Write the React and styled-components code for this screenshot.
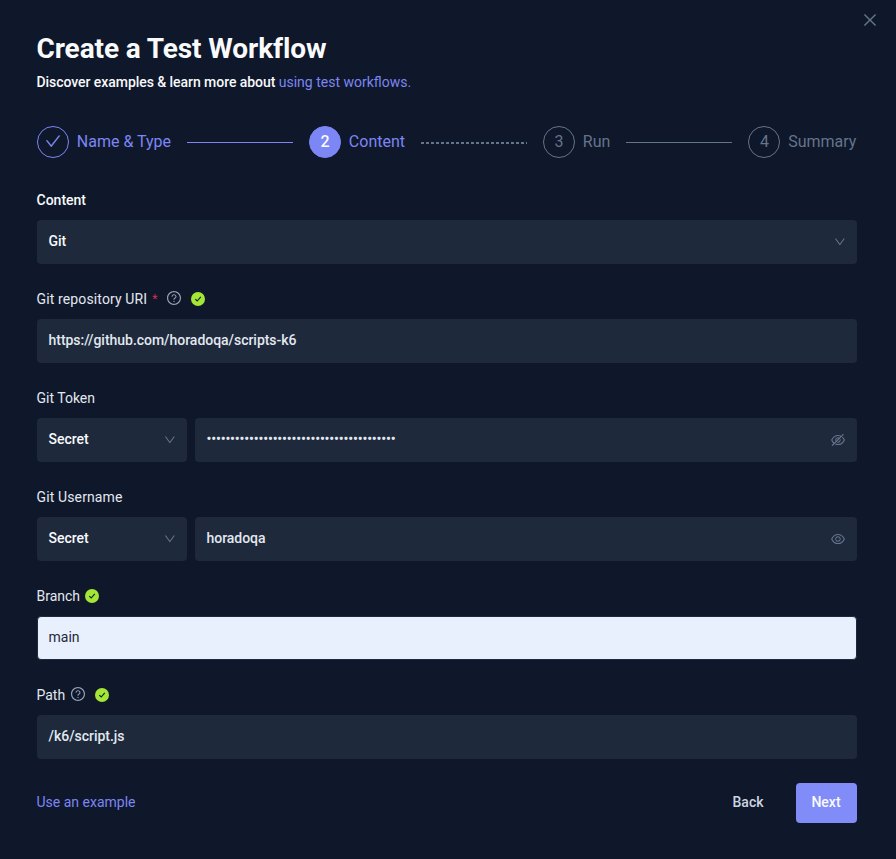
import React from "react";
import styled, { createGlobalStyle, css } from "styled-components";
import {
  AiOutlineCheck,
  AiOutlineClose,
  AiOutlineDown,
  AiOutlineEye,
  AiOutlineEyeInvisible,
  AiOutlineQuestionCircle,
} from "react-icons/ai";

const GlobalStyle = createGlobalStyle`
  * { box-sizing: border-box; }
  body { margin: 0; background: #0f172a; font-family: Roboto, sans-serif; font-size: 14px; }
  svg { display: block; }
`;

const Modal = styled.main`
  position: relative;
  width: 896px;
  height: 859px;
  padding: 32px 39px 0 37px;
  background: #0f172a;
  color: #f8fafc;
  overflow: hidden;
`;

const CloseButton = styled.button`
  position: absolute;
  top: 11px;
  right: 17px;
  padding: 0;
  border: 0;
  background: none;
  color: #64748b;
  font-size: 18px;
`;

const Title = styled.h1`
  margin: 0 0 0 -0.5px;
  font-size: 28px;
  line-height: 33px;
  font-weight: 700;
  letter-spacing: -0.1px;
`;

const Subtitle = styled.p`
  margin: 7px 0 0 -0.5px;
  line-height: 20px;
  font-weight: 500;
  letter-spacing: -0.055px;
`;

const Link = styled.a`
  color: #7c86f4;
  font-weight: 400;
  letter-spacing: 0;
`;

const FooterLink = styled(Link)`
  margin: -3px 0 0 -0.5px;
`;

const Steps = styled.nav`
  display: flex;
  align-items: center;
  height: 32px;
  margin: 34px 0.6px 0 0;
`;

const Step = styled.div`
  display: flex;
  align-items: center;
  gap: 7.8px;
  font-size: 16px;
  line-height: 32px;
  color: ${({ $waiting }) => ($waiting ? "#64748b" : "#7c86f4")};
`;

const StepIcon = styled.span`
  display: flex;
  align-items: center;
  justify-content: center;
  width: 32px;
  height: 32px;
  border: 1px solid currentColor;
  border-radius: 50%;
  line-height: 30px;
  svg { font-size: 18.3px; margin-top: -1px; }
  ${({ $active }) =>
    $active &&
    css`
      background: #7c86f4;
      border-color: #7c86f4;
      color: #f8fafc;
      font-weight: 500;
    `}
`;

const Connector = styled.span`
  flex: 1;
  height: ${({ $kind }) => ($kind === "dashed" ? 2 : 1)}px;
  margin: 1px 16px 0;
  background: ${({ $kind }) =>
    $kind === "done"
      ? "#7c86f4"
      : $kind === "dashed"
      ? "repeating-linear-gradient(90deg, #64748b 0 3px, transparent 3px 5px)"
      : "#64748b"};
`;

const Form = styled.section`
  display: flex;
  flex-direction: column;
  gap: 25px;
  margin-top: 32px;
`;

const Field = styled.div`
  display: grid;
  gap: 10px;
`;

const Label = styled.div`
  display: flex;
  align-items: center;
  height: 20px;
  line-height: 20px;
  margin-left: -0.5px;
  letter-spacing: ${({ $spacing = 0 }) => $spacing}px;
  color: ${({ $strong }) => ($strong ? "#f8fafc" : "#e2e8f0")};
  font-weight: ${({ $strong }) => ($strong ? 500 : 400)};
`;

const Required = styled.span`
  margin-left: 5px;
  color: #cf2f4f;
  font-size: 12px;
`;

const Help = styled.span`
  margin: -2px 4px 0 ${({ $offset }) => $offset}px;
  color: #94a3b8;
  font-size: 16px;
`;

const Valid = styled.svg`
  width: 14px;
  height: 14px;
  margin-left: 5px;
`;

const Controls = styled.div`
  display: flex;
  gap: 8px;
`;

const Control = styled.div`
  display: flex;
  align-items: center;
  justify-content: space-between;
  flex: ${({ $width }) => ($width ? `0 0 ${$width}px` : "1")};
  height: 44px;
  padding: 0 ${({ $select }) => ($select ? 10 : 11)}px 2px 11.5px;
  border: 0 solid #1e293b;
  border-radius: 4px;
  background: #1e293b;
  color: ${({ $select }) => ($select ? "#f8fafc" : "#e2e8f0")};
  font-weight: 500;
  letter-spacing: -0.03px;
  ${({ $autofill }) =>
    $autofill &&
    css`
      border-width: 1px;
      padding-left: 10.5px;
      background: #e8f0fe;
      color: #1f2937;
      font-weight: 400;
      letter-spacing: 0;
    `}
`;

const Masked = styled.span`
  letter-spacing: -0.17px;
`;

const ControlIcon = styled.span`
  margin-top: ${({ $size }) => ($size === 16 ? 1 : 2)}px;
  color: #64748b;
  font-size: ${({ $size }) => $size}px;
`;

const Footer = styled.footer`
  display: flex;
  align-items: center;
  height: 40px;
  margin-top: 24px;
`;

const Button = styled.button`
  height: 40px;
  padding: 0 1px 2px 0;
  border: 0;
  border-radius: 4px;
  font: 500 14px Roboto, sans-serif;
  width: ${({ $primary }) => ($primary ? 61 : 65)}px;
  margin-left: ${({ $primary }) => ($primary ? "15px" : "auto")};
  background: ${({ $primary }) => ($primary ? "#818cf8" : "transparent")};
  color: ${({ $primary }) => ($primary ? "#f8fafc" : "#cbd5e1")};
`;

function ValidMark() {
  return (
    <Valid viewBox="0 0 14 14">
      <circle cx="7" cy="7" r="7" fill="#a3e635" />
      <path d="M4.3 7.1 6.2 9 9.8 4.9" fill="none" stroke="#0f172a" strokeWidth="1.1" />
    </Valid>
  );
}

function Select({ value, width }) {
  return (
    <Control $select $width={width}>
      {value}
      <ControlIcon $size={13.7}><AiOutlineDown /></ControlIcon>
    </Control>
  );
}

function App() {
  return (
    <>
      <GlobalStyle />
      <Modal>
        <CloseButton aria-label="Close"><AiOutlineClose /></CloseButton>
        <Title>Create a Test Workflow</Title>
        <Subtitle>
          Discover examples &amp; learn more about <Link>using test workflows.</Link>
        </Subtitle>
        <Steps>
          <Step><StepIcon><AiOutlineCheck /></StepIcon>Name &amp; Type</Step>
          <Connector $kind="done" />
          <Step><StepIcon $active>2</StepIcon>Content</Step>
          <Connector $kind="dashed" />
          <Step $waiting><StepIcon>3</StepIcon>Run</Step>
          <Connector />
          <Step $waiting><StepIcon>4</StepIcon>Summary</Step>
        </Steps>
        <Form>
          <Field>
            <Label $strong>Content</Label>
            <Select value="Git" />
          </Field>
          <Field>
            <Label $spacing={0.13}>
              Git repository URI<Required>*</Required>
              <Help $offset={8}><AiOutlineQuestionCircle /></Help>
              <ValidMark />
            </Label>
            <Control>https://github.com/horadoqa/scripts-k6</Control>
          </Field>
          <Field>
            <Label>Git Token</Label>
            <Controls>
              <Select value="Secret" width={150} />
              <Control>
                <Masked>{"•".repeat(40)}</Masked>
                <ControlIcon $size={16}><AiOutlineEyeInvisible /></ControlIcon>
              </Control>
            </Controls>
          </Field>
          <Field>
            <Label $spacing={0.13}>Git Username</Label>
            <Controls>
              <Select value="Secret" width={150} />
              <Control>
                horadoqa
                <ControlIcon $size={16}><AiOutlineEye /></ControlIcon>
              </Control>
            </Controls>
          </Field>
          <Field>
            <Label>Branch<ValidMark /></Label>
            <Control $autofill>main</Control>
          </Field>
          <Field>
            <Label>
              Path<Help $offset={5}><AiOutlineQuestionCircle /></Help>
              <ValidMark />
            </Label>
            <Control>/k6/script.js</Control>
          </Field>
        </Form>
        <Footer>
          <FooterLink>Use an example</FooterLink>
          <Button>Back</Button>
          <Button $primary>Next</Button>
        </Footer>
      </Modal>
    </>
  );
}

export default App;
